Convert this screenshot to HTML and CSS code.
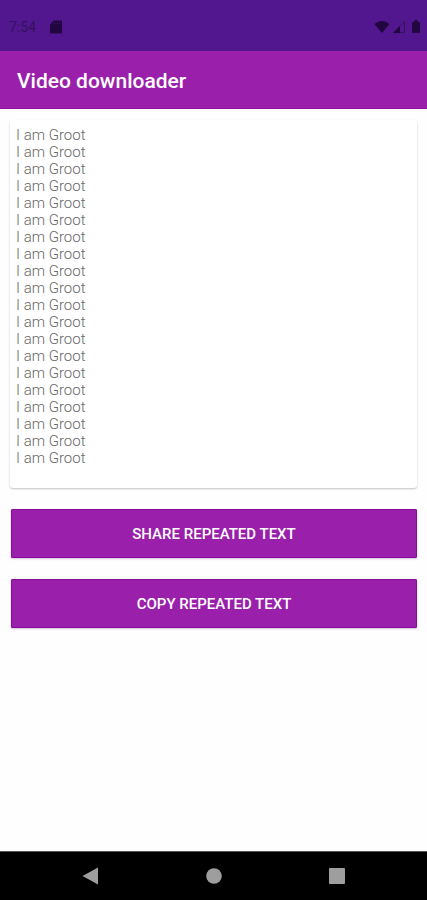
FILE: index.html
```html
<!DOCTYPE html>
<html lang="en">
<head>
<meta charset="utf-8">
<meta name="viewport" content="width=device-width, initial-scale=1">
<title>Video downloader</title>
<link rel="stylesheet" href="styles.css">
</head>
<body>
<div class="status">
  <span class="time">7:54</span>
  <svg class="sd" width="12" height="14" viewBox="0 0 12 14"><path d="M4 0.500h7q1 0 1 1v11q0 1-1 1H1q-1 0-1-1V4.500z"/><path class="slots" d="M4.500 2.500v2M7 2.500v2M9.500 2.500v2"/></svg>
  <svg class="wifi" width="16" height="14" viewBox="0 0 16 14"><path d="M0.500 4Q8-2 15.500 4L8 13z"/></svg>
  <svg class="signal" width="14" height="14" viewBox="0 0 14 14"><path class="outline" d="M12.500 1.500v11h-11z"/><path d="M1 13L8 6v7z"/></svg>
  <svg class="battery" width="8" height="14" viewBox="0 0 8 14"><path d="M2.500 0h3v2H7q1 0 1 1v9q0 1-1 1H1q-1 0-1-1V3q0-1 1-1h1.500z"/></svg>
</div>
<header class="appbar"><h1>Video downloader</h1></header>
<main class="content">
  <div class="card">I am Groot
I am Groot
I am Groot
I am Groot
I am Groot
I am Groot
I am Groot
I am Groot
I am Groot
I am Groot
I am Groot
I am Groot
I am Groot
I am Groot
I am Groot
I am Groot
I am Groot
I am Groot
I am Groot
I am Groot</div>
  <button class="action" type="button">SHARE REPEATED TEXT</button>
  <button class="action" type="button">COPY REPEATED TEXT</button>
</main>
<nav class="navbar" aria-label="System">
  <button type="button" aria-label="Back"><svg width="18" height="18" viewBox="0 0 18 18"><path d="M0.500 9L16 0.500v17z"/></svg></button>
  <button type="button" aria-label="Home"><svg width="18" height="18" viewBox="0 0 18 18"><circle cx="9" cy="9" r="7.800"/></svg></button>
  <button type="button" aria-label="Recent apps"><svg width="18" height="18" viewBox="0 0 18 18"><rect x="1" y="1" width="16" height="16" rx="1"/></svg></button>
</nav>
</body>
</html>
```
FILE: styles.css
```css
* {
  box-sizing: border-box;
}

body {
  margin: 0;
  min-height: 100vh;
  display: flex;
  flex-direction: column;
  background: #fefefe;
  font-family: Roboto, "Liberation Sans", sans-serif;
}

.status {
  display: flex;
  align-items: center;
  height: 51px;
  padding: 2px 7px 0 9px;
  background: #52178f;
  color: #35105f;
  fill: #210640;
}

.time {
  font-size: 14px;
  line-height: 16px;
}

.sd {
  margin-left: 14px;
}

.slots {
  stroke: #381068;
  stroke-width: 1;
}

.wifi {
  margin-left: auto;
}

.signal {
  margin: 0 6px 0 2px;
}

.outline {
  fill: none;
  stroke: #35105f;
}

.appbar {
  display: flex;
  align-items: center;
  height: 58px;
  padding: 2px 17px 0;
  background: #9a20ab;
  border-bottom: 1px solid #8d109f;
  color: #fff;
}

.appbar h1 {
  margin: 0;
  font-size: 21px;
  line-height: 24px;
  font-weight: 500;
}

.content {
  flex: 1;
  display: flex;
  flex-direction: column;
  gap: 21px;
  padding: 11px 10px;
}

.card {
  min-height: 368px;
  padding: 7px 6px 21px;
  border-radius: 3px;
  background: #fff;
  box-shadow: 0 1px 2px rgba(0, 0, 0, 0.24);
  color: #686868;
  font-size: 15px;
  line-height: 17px;
  font-weight: 300;
  white-space: pre-line;
}

.action {
  height: 49px;
  margin: 0 0 0 1px;
  padding: 0;
  border: 1px solid #8a0a9b;
  border-radius: 1px;
  background: #9a20ab;
  box-shadow: 0 1px 2px rgba(90, 0, 110, 0.25);
  color: #fff;
  font: 500 15px/20px Roboto, "Liberation Sans", sans-serif;
}

.navbar {
  display: flex;
  justify-content: center;
  gap: 75px;
  height: 49px;
  background: #000;
  border-top: 1px solid #555;
}

.navbar button {
  display: flex;
  align-items: center;
  justify-content: center;
  width: 48px;
  padding: 0;
  border: 0;
  background: none;
  fill: #9e9e9e;
}
```
